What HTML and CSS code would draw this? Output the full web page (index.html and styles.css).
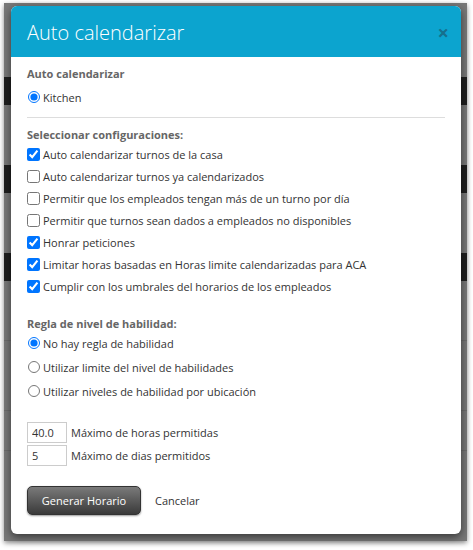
FILE: index.html
```html
<!DOCTYPE html>
<html lang="es">
<head>
<meta charset="utf-8">
<title>Auto calendarizar</title>
<link rel="stylesheet" href="styles.css">
</head>
<body>
<div class="page">
  <div class="backdrop">
    <div class="modal">
      <div class="modal-header">
        <h1 class="modal-title">Auto calendarizar</h1>
        <span class="close">&times;</span>
      </div>
      <div class="modal-body">
        <div class="section-label">Auto calendarizar</div>
        <label class="radio-row first"><input type="radio" name="loc" checked> Kitchen</label>
        <hr class="divider">
        <div class="section-label">Seleccionar configuraciones:</div>
        <label class="check-row"><input type="checkbox" checked>Auto calendarizar turnos de la casa</label>
        <label class="check-row"><input type="checkbox">Auto calendarizar turnos ya calendarizados</label>
        <label class="check-row"><input type="checkbox">Permitir que los empleados tengan más de un turno por día</label>
        <label class="check-row"><input type="checkbox">Permitir que turnos sean dados a empleados no disponibles</label>
        <label class="check-row"><input type="checkbox" checked>Honrar peticiones</label>
        <label class="check-row"><input type="checkbox" checked>Limitar horas basadas en Horas limite calendarizadas para ACA</label>
        <label class="check-row"><input type="checkbox" checked>Cumplir con los umbrales del horarios de los empleados</label>

        <div class="section-label skill">Regla de nivel de habilidad:</div>
        <label class="radio-row lead"><input type="radio" name="skill" checked>No hay regla de habilidad</label>
        <label class="radio-row"><input type="radio" name="skill">Utilizar limite del nivel de habilidades</label>
        <label class="radio-row"><input type="radio" name="skill">Utilizar niveles de habilidad por ubicación</label>

        <div class="limits">
          <label class="limit-row"><input class="num" type="text" value="40.0"><span>Máximo de horas permitidas</span></label>
          <label class="limit-row"><input class="num" type="text" value="5"><span>Máximo de dias permitidos</span></label>
        </div>

        <div class="actions">
          <button class="btn-primary" type="button">Generar Horario</button>
          <a class="cancel" href="#">Cancelar</a>
        </div>
      </div>
    </div>
  </div>
</div>
</body>
</html>
```

FILE: styles.css
```css
* { box-sizing: border-box; }
html, body { margin: 0; padding: 0; background: #fff; }
body {
  font-family: "Open Sans", "Noto Sans", sans-serif;
  font-size: 11px;
  color: #333;
}
.page {
  padding: 3px 6px 10px 4px;
  width: 473px;
}
.backdrop {
  width: 463px;
  padding: 3px 6px 7px 7px;
  background:
    linear-gradient(#1f1f1f, #1f1f1f) 0 74px / 100% 28px no-repeat,
    linear-gradient(#1f1f1f, #1f1f1f) 0 162px / 100% 28px no-repeat,
    linear-gradient(#1f1f1f, #1f1f1f) 0 250px / 100% 28px no-repeat,
    linear-gradient(#6c6c6c, #6c6c6c) 0 337px / 100% 1px no-repeat,
    linear-gradient(#6c6c6c, #6c6c6c) 0 407px / 100% 1px no-repeat,
    linear-gradient(#6c6c6c, #6c6c6c) 0 447px / 100% 1px no-repeat,
    #787878;
  box-shadow: 0 2px 5px rgba(0,0,0,0.45);
}
.modal {
  width: 450px;
  background: #fff;
  border-radius: 6px;
  overflow: hidden;
  box-shadow: 0 3px 8px rgba(0,0,0,0.55);
}
.modal-header {
  height: 51px;
  background: #0ca4cf;
  display: flex;
  align-items: center;
  justify-content: space-between;
  padding: 2px 12px 0 16px;
}
.modal-title {
  margin: 0;
  font-size: 20px;
  font-weight: 300;
  color: #fff;
}
.close {
  color: #16708d;
  font-size: 20px;
  font-weight: 700;
  line-height: 1;
}
.modal-body {
  padding: 9px 16px 19px 16px;
}
.section-label {
  font-weight: 700;
  color: #666;
  line-height: 16px;
}
.section-label.skill { margin-top: 19px; }
.radio-row, .check-row {
  display: flex;
  align-items: center;
  white-space: nowrap;
}
.check-row { height: 22px; }
.radio-row { height: 24px; }
.radio-row.first { height: 22px; margin-top: 4px; }
.radio-row.lead { height: 22px; margin-bottom: 1px; }
.check-row input {
  margin: 0 3px 0 0;
  width: 13px;
  height: 13px;
}
.radio-row input {
  margin: 0 3px 0 1px;
  width: 12px;
  height: 12px;
}
.divider {
  border: 0;
  border-top: 1px solid #ddd;
  margin: 9px 0 9px 0;
}
.limits {
  margin-top: 19px;
  display: flex;
  flex-direction: column;
  gap: 2px;
}
.limit-row {
  display: flex;
  align-items: center;
  gap: 4px;
}
.num {
  width: 40px;
  height: 21px;
  border: 1px solid #ccc;
  padding: 0 4px;
  font: inherit;
  color: #333;
}
.actions {
  margin-top: 20px;
  display: flex;
  align-items: center;
  gap: 14px;
}
.btn-primary {
  width: 114px;
  height: 29px;
  border: 1px solid #333;
  border-radius: 5px;
  background: linear-gradient(#7a7a7a, #3a3a3a);
  color: #fff;
  font: inherit;
  box-shadow: 0 1px 2px rgba(0,0,0,0.4);
}
.cancel {
  color: #333;
  text-decoration: none;
}
```
